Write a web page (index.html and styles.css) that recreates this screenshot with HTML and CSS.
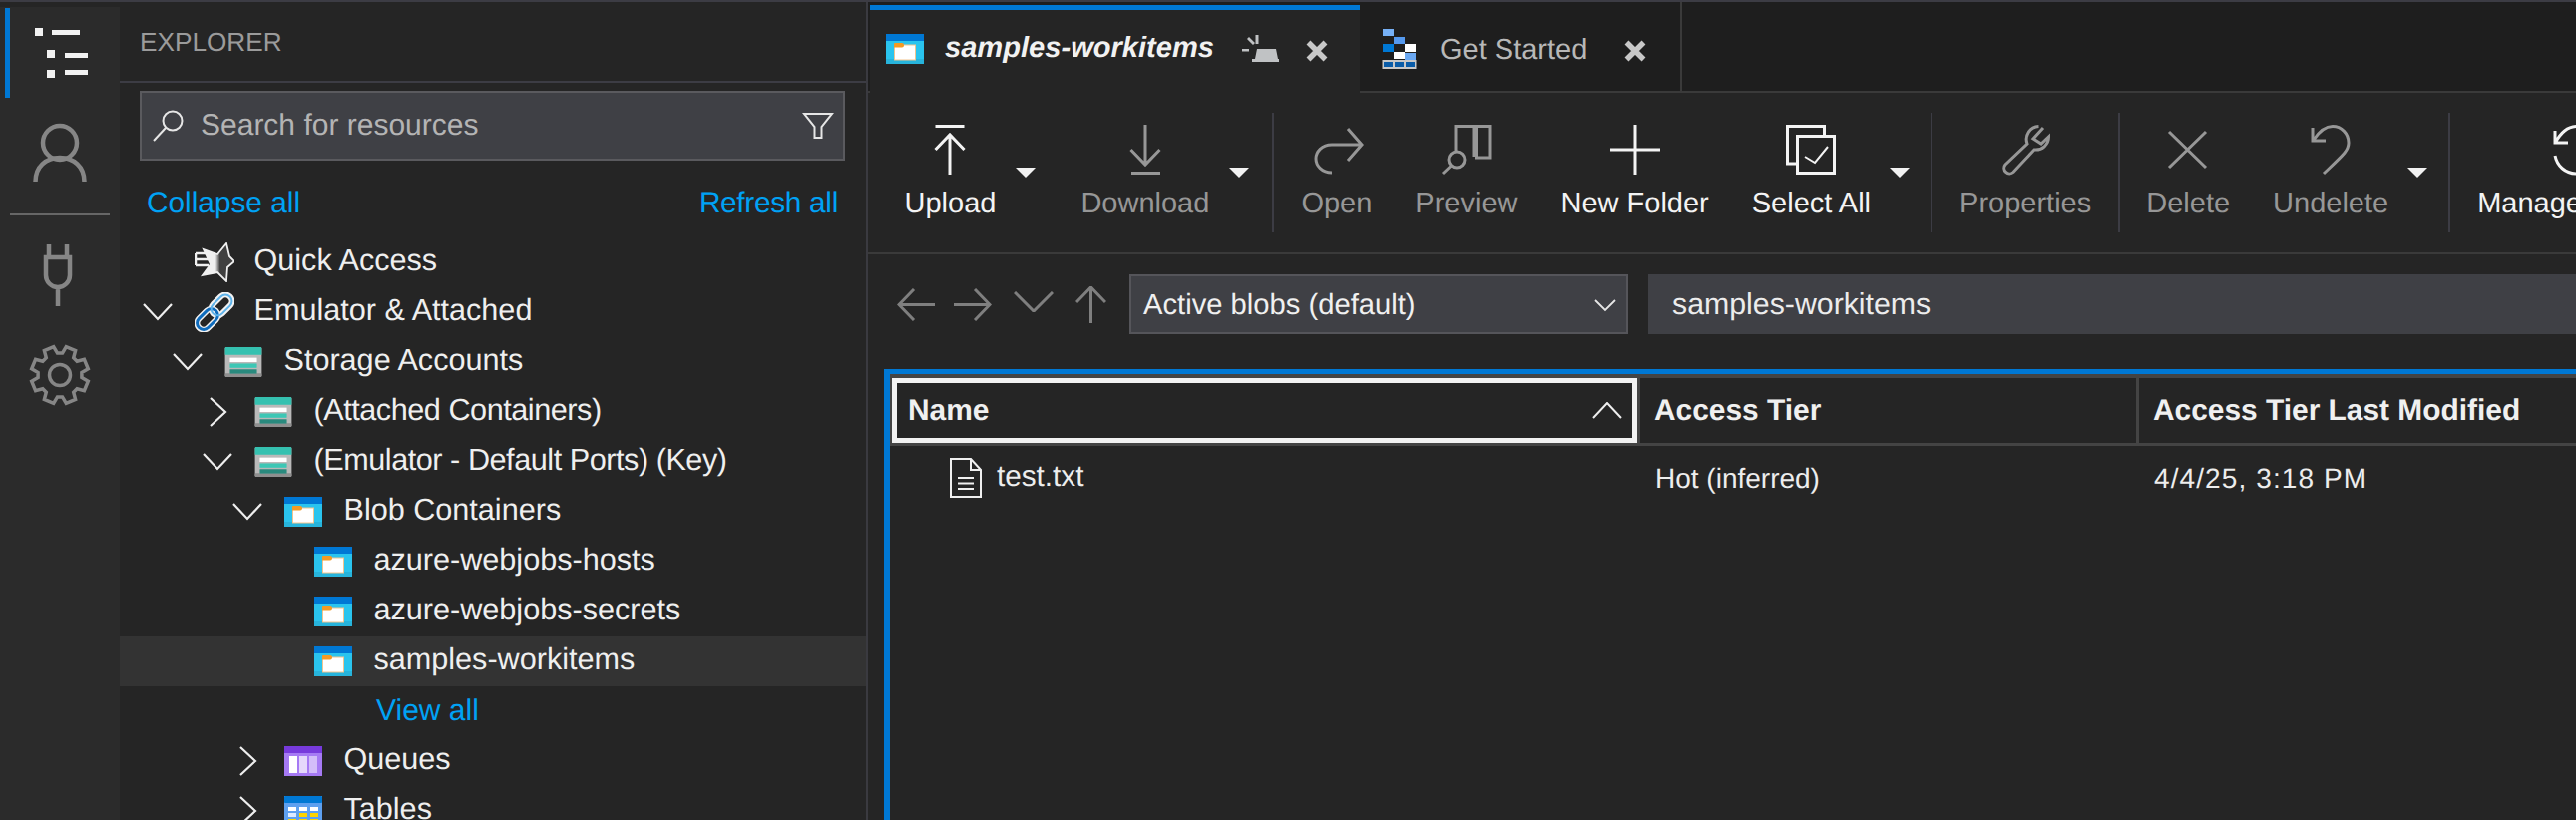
FILE: index.html
```html
<!DOCTYPE html>
<html lang="en">
<head>
<meta charset="utf-8">
<title>Azure Storage Explorer</title>
<link rel="stylesheet" href="styles.css">
</head>
<body>
<svg class="defs" aria-hidden="true">
  <symbol id="i-storage" viewBox="0 0 38 31">
    <rect width="38" height="31" rx="1.5" fill="#b9b9b9"/>
    <path d="M0 1.5A1.5 1.5 0 0 1 1.5 0h35A1.5 1.5 0 0 1 38 1.500V8H0z" fill="#35c1b0"/>
    <rect y="27" width="38" height="4" rx="1" fill="#8f8f8f"/>
    <rect x="5" y="11" width="28" height="4.500" fill="#fff"/>
    <rect x="5" y="17" width="28" height="4.500" fill="#3cc7b5"/>
    <rect x="5" y="23" width="28" height="4.500" fill="#2a8a7e"/>
  </symbol>
  <symbol id="i-container" viewBox="0 0 38 30">
    <rect width="38" height="30" fill="#2ac4ee"/>
    <rect width="38" height="7" fill="#0078d4"/>
    <rect y="25" width="38" height="5" fill="#27b4dc"/>
    <rect x="8.500" y="11" width="21" height="15" fill="#fff" stroke="#f2c48e" stroke-width="1"/>
    <path d="M8 13.500V10Q8 9 9 9h7q2 0 2 2.200t-2 2.300z" fill="#f59a23"/>
  </symbol>
  <symbol id="i-queue" viewBox="0 0 38 30">
    <rect width="38" height="30" fill="#a67af4"/>
    <rect width="38" height="7" fill="#773adc"/>
    <rect x="5" y="10" width="8" height="17" fill="#fff"/>
    <rect x="15" y="10" width="8" height="17" fill="#e5d8fb"/>
    <rect x="25" y="10" width="8" height="17" fill="#d3bdf9"/>
  </symbol>
  <symbol id="i-table" viewBox="0 0 38 30">
    <rect width="38" height="30" fill="#5ea0ef"/>
    <rect width="38" height="7" rx="1" fill="#0078d4"/>
    <path fill="#fff" d="M4 11h8v4H4zM15 11h8v4h-8zM26 11h8v4h-8z"/>
    <path fill="#dceaff" d="M4 17h8v4H4z"/>
    <path fill="#ffd400" d="M15 17h8v4h-8zM26 17h8v4h-8zM4 23h8v4H4zM15 23h8v4h-8zM26 23h8v4h-8z"/>
  </symbol>
  <symbol id="i-right" viewBox="0 0 30 30">
    <path d="M8 1l15 14L8 29" fill="none" stroke="#eee" stroke-width="2.200"/>
  </symbol>
  <symbol id="i-down" viewBox="0 0 30 30">
    <path d="M1 7l14 15L29 7" fill="none" stroke="#eee" stroke-width="2.200"/>
  </symbol>
</svg>

<div class="topline"></div>
<div class="app">
  <nav class="activity">
    <div class="act-item act-active">
      <svg class="act-svg" width="110" height="90" viewBox="10 8 110 90" fill="#f2f2f2">
        <rect x="35" y="28" width="8" height="8"/><rect x="52" y="30" width="28" height="5"/>
        <rect x="47" y="50" width="8" height="8"/><rect x="65" y="53" width="23" height="5"/>
        <rect x="47" y="70" width="8" height="8"/><rect x="65" y="70" width="23" height="5"/>
      </svg>
    </div>
    <svg class="act-person" width="120" height="70" viewBox="0 0 120 70" fill="none" stroke="#868686" stroke-width="4.500">
      <circle cx="60" cy="26" r="17"/>
      <path d="M35.500 65C35.500 50 46 41 60 41s24.500 9 24.500 24"/>
    </svg>
    <div class="act-divider"></div>
    <svg class="act-plug" width="120" height="62" viewBox="0 0 120 62" fill="none" stroke="#868686" stroke-width="4.500">
      <path d="M49 0v13M67 0v13M46 13h24v18a12 12 0 0 1-24 0zM58 43v19"/>
    </svg>
    <svg class="act-gear" width="120" height="62" viewBox="0 0 120 62" fill="none" stroke="#868686" stroke-width="3.500">
      <g transform="translate(60 31)">
        <path d="M2.500-21.900L6.300-28.300 15.600-24.400 13.700-17.200 17.200-13.700 24.400-15.600 28.300-6.300 21.900-2.500 21.900 2.500 28.300 6.300 24.400 15.600 17.200 13.700 13.700 17.200 15.600 24.400 6.300 28.300 2.500 21.900-2.500 21.900-6.300 28.300-15.600 24.400-13.700 17.200-17.200 13.700-24.400 15.600-28.300 6.300-21.900 2.500-21.900-2.500-28.300-6.300-24.400-15.600-17.200-13.700-13.700-17.200-15.600-24.400-6.300-28.300-2.500-21.900z"/>
        <circle r="10.500"/>
      </g>
    </svg>
  </nav>

  <aside class="sidebar">
    <header class="side-head">EXPLORER</header>
    <div class="search">
      <svg class="search-icon" width="32" height="32" viewBox="0 0 32 32" fill="none" stroke="#e6e6e6" stroke-width="2">
        <circle cx="20" cy="11" r="9.500"/><path d="M13 18L1 31"/>
      </svg>
      <span class="search-text">Search for resources</span>
      <svg class="filter-icon" width="32" height="28" viewBox="0 0 32 28" fill="none" stroke="#e6e6e6" stroke-width="2">
        <path d="M2 2h28L19.500 15v11h-7V15z"/>
      </svg>
    </div>
    <div class="actions"><a class="link">Collapse all</a><a class="link">Refresh all</a></div>
    <ul class="tree">
      <li class="row d0">
        <span class="chev"></span>
        <svg class="quick" width="40" height="40" viewBox="0 0 40 40">
          <defs><linearGradient id="qa" x1="0" x2="1"><stop offset="0" stop-color="#f0f0f0"/><stop offset=".4" stop-color="#f0f0f0"/><stop offset=".55" stop-color="#404040"/></linearGradient></defs>
          <path d="M32 1l3 13 5 5-7 6-1 14-9-9-15 3 8-11-7-15 14 5z" fill="url(#qa)" stroke="#f0f0f0" stroke-width="1.800"/>
          <path d="M1 11h13M1 17h13M1 23h13M1 11v12" stroke="#f0f0f0" stroke-width="2.500" fill="none"/>
        </svg>
        <span class="label">Quick Access</span>
      </li>
      <li class="row d0">
        <svg class="chev" viewBox="0 0 30 30"><use href="#i-down"/></svg>
        <svg class="chain" width="40" height="40" viewBox="0 0 40 40" fill="none">
          <g transform="rotate(-45 20 20)">
            <rect x="-2" y="13.500" width="24" height="13" rx="6.500" stroke="#f2f2f2" stroke-width="6"/>
            <rect x="18" y="13.500" width="24" height="13" rx="6.500" stroke="#f2f2f2" stroke-width="6"/>
            <rect x="-2" y="13.500" width="24" height="13" rx="6.500" stroke="#0f6cbd" stroke-width="3"/>
            <rect x="18" y="13.500" width="24" height="13" rx="6.500" stroke="#5fb3ea" stroke-width="2"/>
          </g>
        </svg>
        <span class="label">Emulator &amp; Attached</span>
      </li>
      <li class="row d1">
        <svg class="chev"><use href="#i-down"/></svg>
        <svg class="ticon"><use href="#i-storage"/></svg>
        <span class="label">Storage Accounts</span>
      </li>
      <li class="row d2">
        <svg class="chev"><use href="#i-right"/></svg>
        <svg class="ticon"><use href="#i-storage"/></svg>
        <span class="label tight">(Attached Containers)</span>
      </li>
      <li class="row d2">
        <svg class="chev"><use href="#i-down"/></svg>
        <svg class="ticon"><use href="#i-storage"/></svg>
        <span class="label tight">(Emulator - Default Ports) (Key)</span>
      </li>
      <li class="row d3">
        <svg class="chev"><use href="#i-down"/></svg>
        <svg class="ticon"><use href="#i-container"/></svg>
        <span class="label">Blob Containers</span>
      </li>
      <li class="row d4">
        <span class="chev"></span>
        <svg class="ticon"><use href="#i-container"/></svg>
        <span class="label">azure-webjobs-hosts</span>
      </li>
      <li class="row d4">
        <span class="chev"></span>
        <svg class="ticon"><use href="#i-container"/></svg>
        <span class="label">azure-webjobs-secrets</span>
      </li>
      <li class="row d4 selected">
        <span class="chev"></span>
        <svg class="ticon"><use href="#i-container"/></svg>
        <span class="label">samples-workitems</span>
      </li>
      <li class="row viewall"><a class="link">View all</a></li>
      <li class="row d3">
        <svg class="chev"><use href="#i-right"/></svg>
        <svg class="ticon"><use href="#i-queue"/></svg>
        <span class="label">Queues</span>
      </li>
      <li class="row d3">
        <svg class="chev"><use href="#i-right"/></svg>
        <svg class="ticon"><use href="#i-table"/></svg>
        <span class="label">Tables</span>
      </li>
    </ul>
  </aside>

  <main class="main">
    <div class="tabs">
      <div class="tab tab-active">
        <svg class="ticon"><use href="#i-container"/></svg>
        <span class="tab-title">samples-workitems</span>
        <svg class="pin" width="38" height="27" viewBox="0 0 38 27" fill="#c0c2c4">
          <path d="M10 24h27v3H10zM13 24l2-10h19l2 10z"/>
          <path d="M13.500 0h3v9h-3zM0 14h7v2.500H0zM5 4l2-2 6 6-2 2z"/>
        </svg>
        <svg class="close" width="22" height="22" viewBox="0 0 22 22"><path d="M2.500 2.500l17 17M19.500 2.500l-17 17" stroke="#c8c8c8" stroke-width="5.500"/></svg>
      </div>
      <div class="tab tab-idle">
        <svg class="gs" width="35" height="40" viewBox="0 0 35 40">
          <rect x="1" y="0" width="11" height="7" fill="#76b0f5"/>
          <rect x="12" y="8" width="11" height="7" fill="#5599ee"/>
          <rect x="1" y="15" width="11" height="8" fill="#0078d4"/>
          <rect x="23" y="15" width="11" height="8" fill="#fff"/>
          <rect x="12" y="23" width="11" height="7" fill="#fff"/>
          <rect x="23" y="24" width="11" height="7" fill="#6aa8f2"/>
          <rect x="0.500" y="31" width="34" height="9" fill="#c8c8c8"/>
          <path fill="#0a5ca8" d="M2 33h9v5H2zM13 33h9v5h-9zM24 33h9v5h-9z"/>
        </svg>
        <span class="tab-title-idle">Get Started</span>
        <svg class="close" width="22" height="22" viewBox="0 0 22 22"><path d="M2.500 2.500l17 17M19.500 2.500l-17 17" stroke="#c8c8c8" stroke-width="5.500"/></svg>
      </div>
    </div>

    <div class="toolbar">
      <button class="tbtn">
        <svg class="ticn" viewBox="0 0 50 50"><path d="M10.500 1.500h29M25 50V10M10.500 25L25 10l14.500 15"/></svg>
        <span>Upload</span>
      </button>
      <span class="caret"></span>
      <button class="tbtn dim">
        <svg class="ticn" viewBox="0 0 50 50"><path d="M25 0v40M10.500 25L25 40l14.500-15M11 48.500h29"/></svg>
        <span>Download</span>
      </button>
      <span class="caret"></span>
      <span class="tsep after-caret"></span>
      <button class="tbtn dim">
        <svg class="ticn" viewBox="0 0 50 50"><path d="M36 4l14 16-14 16M49 20H20C10 20 4 27 4 34s6 14 16 14"/></svg>
        <span>Open</span>
      </button>
      <button class="tbtn dim">
        <svg class="ticn" viewBox="0 0 50 50"><path d="M14 27V1.500h18V32M34.500 1.500H48V33H34.500zM9.500 41L1 49"/><circle cx="15" cy="35" r="8"/></svg>
        <span>Preview</span>
      </button>
      <button class="tbtn">
        <svg class="ticn" viewBox="0 0 50 50"><path d="M0 25h50M25 0v50"/></svg>
        <span>New Folder</span>
      </button>
      <button class="tbtn">
        <svg class="ticn" viewBox="0 0 50 50"><path d="M11 39H1.500V1.500h37V11"/><path d="M11.500 11.500h37v37h-37z"/><path d="M19 32l10 6 13-16" stroke-width="2"/></svg>
        <span>Select All</span>
      </button>
      <span class="caret caret-tight"></span>
      <span class="tsep after-caret"></span>
      <button class="tbtn dim">
        <svg class="ticn" viewBox="0 0 50 50"><path d="M38.500 1.500A13 13 0 0 0 27 19L5 40a5.500 5.500 0 0 0 8 7.500L34 25a13 13 0 0 0 14.500-13L41 19l-8-5 10-11"/></svg>
        <span>Properties</span>
      </button>
      <span class="tsep tsep-narrow"></span>
      <button class="tbtn dim">
        <svg class="ticn" viewBox="0 0 50 50"><path d="M6 7l37 36M43 7L6 43"/></svg>
        <span>Delete</span>
      </button>
      <button class="tbtn dim">
        <svg class="ticn" viewBox="0 0 50 50"><path d="M7 3v13h13M8 15C14 6 20 1.500 27 1.500c9 0 16 7.500 16 16.500 0 8-5 12-25 31"/></svg>
        <span>Undelete</span>
      </button>
      <span class="caret caret-tight"></span>
      <span class="tsep after-caret"></span>
      <button class="tbtn manage">
        <svg class="ticn" viewBox="0 0 50 50"><path d="M2 6v12h13M2 18C8 8 14 1.500 25 1.500M2 31c2 10 10 18 22 18"/></svg>
        <span>Manage</span>
      </button>
    </div>

    <div class="navrow">
      <svg class="nav-icon nav-back" width="38" height="33" viewBox="0 0 38 33"><path d="M38 16.500H2M17 1L2 16.500 17 32"/></svg>
      <svg class="nav-icon nav-fwd" width="38" height="33" viewBox="0 0 38 33"><path d="M0 16.500h36M21 1l15 15.500L21 32"/></svg>
      <svg class="nav-icon nav-down" width="40" height="21" viewBox="0 0 40 21"><path d="M1 1l19 19L39 1"/></svg>
      <svg class="nav-icon nav-up" width="31" height="37" viewBox="0 0 31 37"><path d="M15.500 37V1M1 16L15.500 1 30 16"/></svg>
      <div class="select">
        <span>Active blobs (default)</span>
        <svg width="22" height="13" viewBox="0 0 22 13" fill="none" stroke="#e6e6e6" stroke-width="1.800"><path d="M1 1l10 10L21 1"/></svg>
      </div>
      <div class="address">samples-workitems</div>
    </div>

    <section class="grid">
      <div class="grid-head">
        <div class="hcell hcell-focus"><span>Name</span>
          <svg width="30" height="17" viewBox="0 0 30 17" fill="none" stroke="#eee" stroke-width="2"><path d="M1 16L15 1l14 15"/></svg>
        </div>
        <div class="hcell">Access Tier</div>
        <div class="hcell">Access Tier Last Modified</div>
      </div>
      <div class="grid-row">
        <div class="cell cell-name">
          <svg width="32" height="40" viewBox="0 0 32 40" fill="none" stroke="#f0f0f0" stroke-width="2"><path d="M1 1h20l10 11v27H1zM21 1v11h10M8 20h16M8 25.500h16M8 31h16"/></svg>
          <span>test.txt</span>
        </div>
        <div class="cell">Hot (inferred)</div>
        <div class="cell cell-date">4/4/25, 3:18 PM</div>
      </div>
    </section>
  </main>
</div>
</body>
</html>
```

FILE: styles.css
```css
* { box-sizing: border-box; }
html, body { margin: 0; height: 100%; overflow: hidden; background: #252525; }
body {
  font-family: "Liberation Sans", Arial, sans-serif;
  color: #f0f0f0;
  display: flex;
  flex-direction: column;
  font-size: 30px;
  text-rendering: geometricPrecision;
}
.defs { width: 0; height: 0; display: none; }
.topline { height: 2px; background: #3c3c44; flex: none; }
.app { flex: 1; display: grid; grid-template-columns: 120px 750px 1fr; min-height: 0; }

/* activity bar */
.activity { background: #2b2b2b; border-top: 5px solid #252525; display: flex; flex-direction: column; align-items: flex-start; }
.act-item { height: 90px; margin-top: 1px; }
.act-active { margin-left: 5px; border-left: 5px solid #0078d4; }
.act-svg { display: block; }
.act-person { display: block; margin-top: 19px; }
.act-divider { width: 100px; height: 2px; background: #666; margin: 27px 0 0 10px; }
.act-plug { display: block; margin-top: 29px; }
.act-gear { display: block; margin-top: 38px; }

/* sidebar */
.sidebar { background: #252525; border-right: 2px solid #3a3a40; display: flex; flex-direction: column; min-width: 0; overflow: hidden; }
.side-head { height: 81px; flex: none; border-bottom: 2px solid #3c3c44; padding: 2px 20px 0; display: flex; align-items: center; font-size: 26.200px; color: #9b9b9b; }
.search { flex: none; margin: 8px 21px 0 20px; height: 70px; background: #3f4045; border: 2px solid #5a5a5e; display: flex; align-items: center; padding: 0 9px 0 11px; }
.search-text { margin-left: 16px; flex: 1; font-size: 30px; color: #b4b4b4; }
.actions { flex: none; height: 77px; padding: 8px 28px 0 27px; display: flex; align-items: center; justify-content: space-between; }
.link { color: #00a2f5; font-size: 29.800px; }
.actions .link + .link { letter-spacing: -.3px; }
.tree { list-style: none; margin: 0; padding: 0; flex: none; }
.row { height: 50px; display: flex; align-items: center; white-space: nowrap; }
.chev { width: 30px; height: 30px; flex: none; margin-right: 22px; }
.d0 { padding-left: 23px; }
.d1 { padding-left: 53px; }
.d2 { padding-left: 83px; }
.d3 { padding-left: 113px; }
.d4 { padding-left: 143px; }
.ticon { width: 38px; height: 30px; flex: none; }
.quick, .chain { flex: none; margin-right: -2px; }
.label { margin-left: 21.500px; font-size: 30.600px; color: #efefef; padding-bottom: 3px; }
.tight { letter-spacing: -.45px; }
.selected { background: #333; }
.viewall { padding-left: 257px; }
.viewall .link { font-size: 30px; }

/* main */
.main { display: flex; flex-direction: column; min-width: 0; overflow: hidden; background: #252525; }
.tabs { height: 91px; flex: none; background: #1e1e1e; border-bottom: 2px solid #3a3a3a; display: flex; }
.tab { display: flex; align-items: center; white-space: nowrap; }
.tab-active { width: 491px; margin: 3px 0 -2px 2px; height: 88px; border-top: 5px solid #0078d4; background: #252525; padding: 0 0 6px 16px; }
.tab-title { margin-left: 21px; font-size: 29.100px; font-weight: bold; font-style: italic; color: #f2f2f2; }
.pin { margin-left: 28px; flex: none; }
.tab-active .close { margin: 5px 0 0 26px; }
.tab-idle { width: 321px; margin-left: 2px; border-right: 2px solid #3a3a3a; padding: 5px 0 0 20px; }
.tab-title-idle { margin-left: 23px; font-size: 29px; color: #b8b8b8; padding-top: 2px; }
.tab-idle .close { margin: 4px 0 0 37px; }

/* toolbar */
.toolbar { height: 162px; flex: none; padding: 20px 0 0 15px; border-bottom: 2px solid #3a3a3a; display: flex; align-items: flex-start; overflow: hidden; }
.tbtn { all: unset; box-sizing: border-box; flex: none; display: flex; flex-direction: column; align-items: center; padding: 12px 21.500px 0; height: 120px; font-size: 29px; color: #f4f4f4; white-space: nowrap; font-family: inherit; }
.tbtn span { margin-top: 12px; line-height: 34px; }
.tbtn.dim { color: #979797; }
.ticn { width: 50px; height: 50px; fill: none; stroke: currentColor; stroke-width: 3; flex: none; overflow: visible; }
.caret { flex: none; width: 0; height: 0; border-left: 10px solid transparent; border-right: 10px solid transparent; border-top: 10px solid #f2f2f2; margin: 55px 24px 0 -2px; }
.caret.caret-tight { margin: 55px 22px 0 -3px; }
.tsep { flex: none; width: 2px; height: 120px; background: #3c3c44; margin: 0 6px; }
.tsep.after-caret { margin-left: -1px; }
.tsep.tsep-narrow { margin: 0 5px; }
.manage { align-items: flex-start; }
.manage .ticn { margin-left: 76px; }

/* nav row */
.navrow { flex: none; height: 60px; margin-top: 20px; padding-left: 29px; display: flex; align-items: center; }
.nav-icon { flex: none; fill: none; stroke: #7f7f7f; stroke-width: 3; }
.nav-back { margin-right: 19px; }
.nav-fwd { margin-right: 22px; }
.nav-down { margin-right: 22px; margin-top: -5px; }
.nav-up { margin-right: 23px; }
.select { flex: none; width: 500px; height: 60px; background: #3f4045; border: 2px solid #55555a; display: flex; align-items: center; justify-content: space-between; padding: 2px 10px 0 12px; font-size: 29.200px; color: #f0f0f0; margin-right: 20px; }
.address { flex: 1; height: 60px; background: #3f4045; display: flex; align-items: center; padding: 2px 0 0 24px; font-size: 30.300px; color: #ececec; }

/* grid */
.grid { flex: 1; margin: 35px 0 0 16px; border-top: 5px solid #0078d4; border-left: 6px solid #0078d4; min-height: 0; }
.grid-head { display: grid; grid-template-columns: 747px 500px 1fr; padding: 4px 0 0 2px; background: #444; border-bottom: 3px solid #444; }
.hcell { height: 65px; background: #252525; display: flex; align-items: center; padding: 1px 0 0 14px; font-weight: bold; font-size: 29.900px; border-left: 3px solid #444; white-space: nowrap; }
.hcell-focus { border: 5px solid #f2f2f2; padding: 0 10px 0 11px; justify-content: space-between; }
.grid-row { display: grid; grid-template-columns: 747px 500px 1fr; padding-left: 2px; height: 66px; }
.cell { display: flex; align-items: center; font-size: 28px; padding-left: 18px; white-space: nowrap; color: #ededed; }
.cell-name { padding: 0 0 2px 58px; font-size: 29.700px; }
.cell-name span { margin-left: 15px; padding-bottom: 2px; }
.cell-date { letter-spacing: 1.100px; }
```
